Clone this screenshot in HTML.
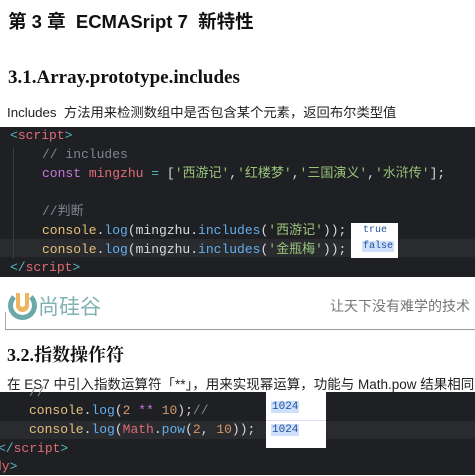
<!DOCTYPE html>
<html><head><meta charset="utf-8"><style>
*{margin:0;padding:0;box-sizing:border-box}
body{width:475px;height:475px;overflow:hidden;background:#fff;position:relative;font-family:"Liberation Sans","Noto Sans CJK SC",sans-serif;color:#111}
.a{position:absolute;white-space:nowrap}
.code{position:absolute;left:0;width:475px;background:#1f2024;font-family:"Liberation Mono","Noto Sans CJK SC",monospace;font-size:13px}
.ln{position:absolute;white-space:pre;line-height:19px}
.k{color:#c678dd}.v{color:#e06c75}.s{color:#98c379}.c{color:#7f848e}.y{color:#e5c07b}.b{color:#61afef}.w{color:#d7dae0}.t{color:#56b6c2}.n{color:#d19a66}
</style></head><body>
<div class="a" style="left:8px;top:8px;font-size:18.5px;font-weight:bold;font-family:'Liberation Sans','Noto Sans CJK SC',sans-serif">第 3 章&nbsp; ECMASript 7&nbsp; 新特性</div>
<div class="a" style="left:8px;top:67px;font-size:19px;font-weight:bold;font-family:'Liberation Serif','Noto Serif CJK SC',serif">3.1.Array.prototype.includes</div>
<div class="a" style="left:7px;top:102px;font-size:13.3px;color:#222">Includes&nbsp; 方法用来检测数组中是否包含某个元素，返回布尔类型值</div>

<div class="code" style="top:127px;height:150px">
<div style="position:absolute;left:0;top:112px;width:475px;height:18px;background:#2a2b2f"></div>
<div style="position:absolute;left:13px;top:20px;width:1px;height:112px;background:#3a3b3f"></div>
<div class="ln" style="left:10px;top:-1px"><span class="t">&lt;</span><span class="v">script</span><span class="t">&gt;</span></div>
<div class="ln" style="left:42px;top:18px"><span class="c">// includes</span></div>
<div class="ln" style="left:42px;top:37px"><span class="k">const</span> <span class="v">mingzhu</span> <span class="t">=</span> <span class="w">[</span><span class="s">'西游记'</span><span class="w">,</span><span class="s">'红楼梦'</span><span class="w">,</span><span class="s">'三国演义'</span><span class="w">,</span><span class="s">'水浒传'</span><span class="w">];</span></div>
<div class="ln" style="left:42px;top:75px"><span class="c">//判断</span></div>
<div class="ln" style="left:42px;top:94px"><span class="y">console</span><span class="w">.</span><span class="b">log</span><span class="w">(mingzhu.</span><span class="b">includes</span><span class="w">(</span><span class="s">'西游记'</span><span class="w">));</span></div>
<div class="ln" style="left:42px;top:113px"><span class="y">console</span><span class="w">.</span><span class="b">log</span><span class="w">(mingzhu.</span><span class="b">includes</span><span class="w">(</span><span class="s">'金瓶梅'</span><span class="w">));</span></div>
<div class="ln" style="left:10px;top:131px"><span class="t">&lt;/</span><span class="v">script</span><span class="t">&gt;</span></div>
<div style="position:absolute;left:351px;top:96px;width:47px;height:35px;background:#fff;font-size:10px">
<div style="position:absolute;left:12px;top:2px;color:#2050a0">true</div>
<div style="position:absolute;left:11px;top:18px;color:#2050a0;background:#cfe0fb;padding:0 1px">false</div></div>
</div>

<div style="position:absolute;left:8px;top:291px;width:29px;height:29px;border-radius:50%;border:5px solid #6aa9a7;border-top-color:transparent;transform:rotate(0deg)"></div>
<div style="position:absolute;left:16px;top:293px;width:13px;height:19px;border-radius:0 0 7px 7px;background:#f0b35e"></div>
<div style="position:absolute;left:20px;top:293px;width:5px;height:14px;border-radius:0 0 3px 3px;background:#fff"></div>
<div class="a" style="left:38px;top:291px;font-size:21px;color:#7fb2b0">尚硅谷</div>
<div class="a" style="left:330px;top:296px;font-size:14px;color:#777">让天下没有难学的技术</div>
<div style="position:absolute;left:5px;top:312px;width:1px;height:18px;background:#aaa"></div>
<div style="position:absolute;left:5px;top:329px;width:470px;height:1px;background:#999"></div>
<div class="a" style="left:7px;top:341px;font-size:18px;font-weight:bold;font-family:'Liberation Serif','Noto Serif CJK SC',serif">3.2.指数操作符</div>
<div class="a" style="left:7px;top:373px;font-size:13.5px;color:#222">在 ES7 中引入指数运算符「**」，用来实现幂运算，功能与 Math.pow 结果相同</div>

<div class="code" style="top:392px;height:83px">
<div style="position:absolute;left:0;top:29px;width:475px;height:18px;background:#2a2b2f"></div>
<div class="ln" style="left:29px;top:-9px"><span class="c">//</span></div>
<div class="ln" style="left:29px;top:9px"><span class="y">console</span><span class="w">.</span><span class="b">log</span><span class="w">(</span><span class="n">2</span> <span class="k">**</span> <span class="n">10</span><span class="w">);</span><span class="c">//</span></div>
<div class="ln" style="left:29px;top:28px"><span class="y">console</span><span class="w">.</span><span class="b">log</span><span class="w">(</span><span class="v">Math</span><span class="w">.</span><span class="b">pow</span><span class="w">(</span><span class="n">2</span><span class="w">, </span><span class="n">10</span><span class="w">));</span></div>
<div class="ln" style="left:-2px;top:47px"><span class="t">&lt;/</span><span class="v">script</span><span class="t">&gt;</span></div>
<div class="ln" style="left:-6px;top:65px"><span class="v">dy</span><span class="t">&gt;</span></div>
<div style="position:absolute;left:266px;top:0;width:60px;height:56px;background:#fff;font-size:11px">
<div style="position:absolute;left:0;top:28px;width:60px;height:1px;background:#dde"></div>
<div style="position:absolute;left:5px;top:9px;color:#2050a0;background:#cfe0fb;padding:0 1px">1024</div>
<div style="position:absolute;left:5px;top:32px;color:#2050a0;background:#cfe0fb;padding:0 1px">1024</div></div>
</div>
</body></html>
